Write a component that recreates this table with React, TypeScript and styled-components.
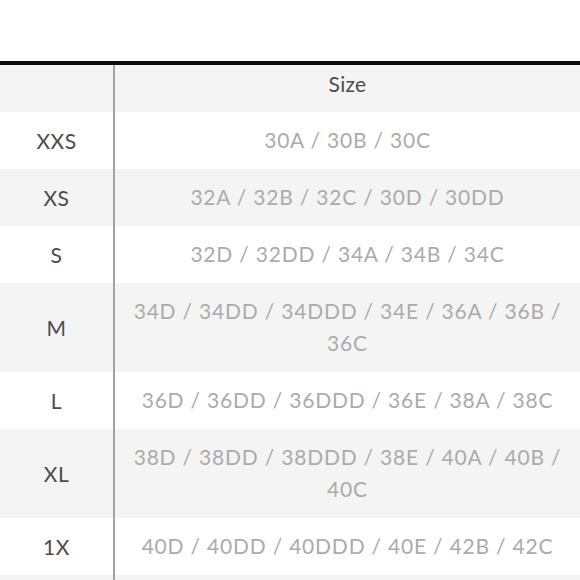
import styled, { createGlobalStyle } from 'styled-components';

const GlobalStyle = createGlobalStyle`
  html, body {
    margin: 0;
    padding: 0;
    background: #ffffff;
    overflow: hidden;
  }
`;

const sizes = [
  { label: 'XXS', cups: '30A / 30B / 30C' },
  { label: 'XS', cups: '32A / 32B / 32C / 30D / 30DD' },
  { label: 'S', cups: '32D / 32DD / 34A / 34B / 34C' },
  { label: 'M', cups: '34D / 34DD / 34DDD / 34E / 36A / 36B / 36C' },
  { label: 'L', cups: '36D / 36DD / 36DDD / 36E / 38A / 38C' },
  { label: 'XL', cups: '38D / 38DD / 38DDD / 38E / 40A / 40B / 40C' },
  { label: '1X', cups: '40D / 40DD / 40DDD / 40E / 42B / 42C' },
];

const Page = styled.div`
  padding-top: 61px;
  height: 580px;
  box-sizing: border-box;
  overflow: hidden;
  font-family: Lato, 'Open Sans', sans-serif;
`;

const Table = styled.div`
  border-top: 4px solid #0b0b0b;
  display: flex;
  flex-direction: column;
`;

const Row = styled.div<{ $shaded: boolean }>`
  display: grid;
  grid-template-columns: 115px 1fr;
  background: ${(p) => (p.$shaded ? '#f4f4f4' : '#ffffff')};
`;

const LabelCell = styled.div`
  border-right: 2px solid #a2a2a2;
  display: flex;
  align-items: center;
  justify-content: center;
  color: #4c4c4c;
  font-size: 21px;
  line-height: 32px;
  letter-spacing: 0.5px;
`;

const CupCell = styled.div<{ $header?: boolean }>`
  padding: ${(p) => (p.$header ? '3px 13px 12px' : '12px 13px 13px')};
  text-align: center;
  color: ${(p) => (p.$header ? '#4c4c4c' : '#ababab')};
  font-size: 21px;
  line-height: 32px;
  letter-spacing: ${(p) => (p.$header ? '0.3px' : '0.8px')};
`;

const FillerRow = styled(Row)`
  height: 40px;
`;

export default function App() {
  return (
    <>
      <GlobalStyle />
      <Page>
        <Table>
          <Row $shaded>
            <LabelCell />
            <CupCell $header>Size</CupCell>
          </Row>
          {sizes.map((s, i) => (
            <Row key={s.label} $shaded={i % 2 === 1}>
              <LabelCell>{s.label}</LabelCell>
              <CupCell>{s.cups}</CupCell>
            </Row>
          ))}
          <FillerRow $shaded>
            <LabelCell />
            <CupCell />
          </FillerRow>
        </Table>
      </Page>
    </>
  );
}
